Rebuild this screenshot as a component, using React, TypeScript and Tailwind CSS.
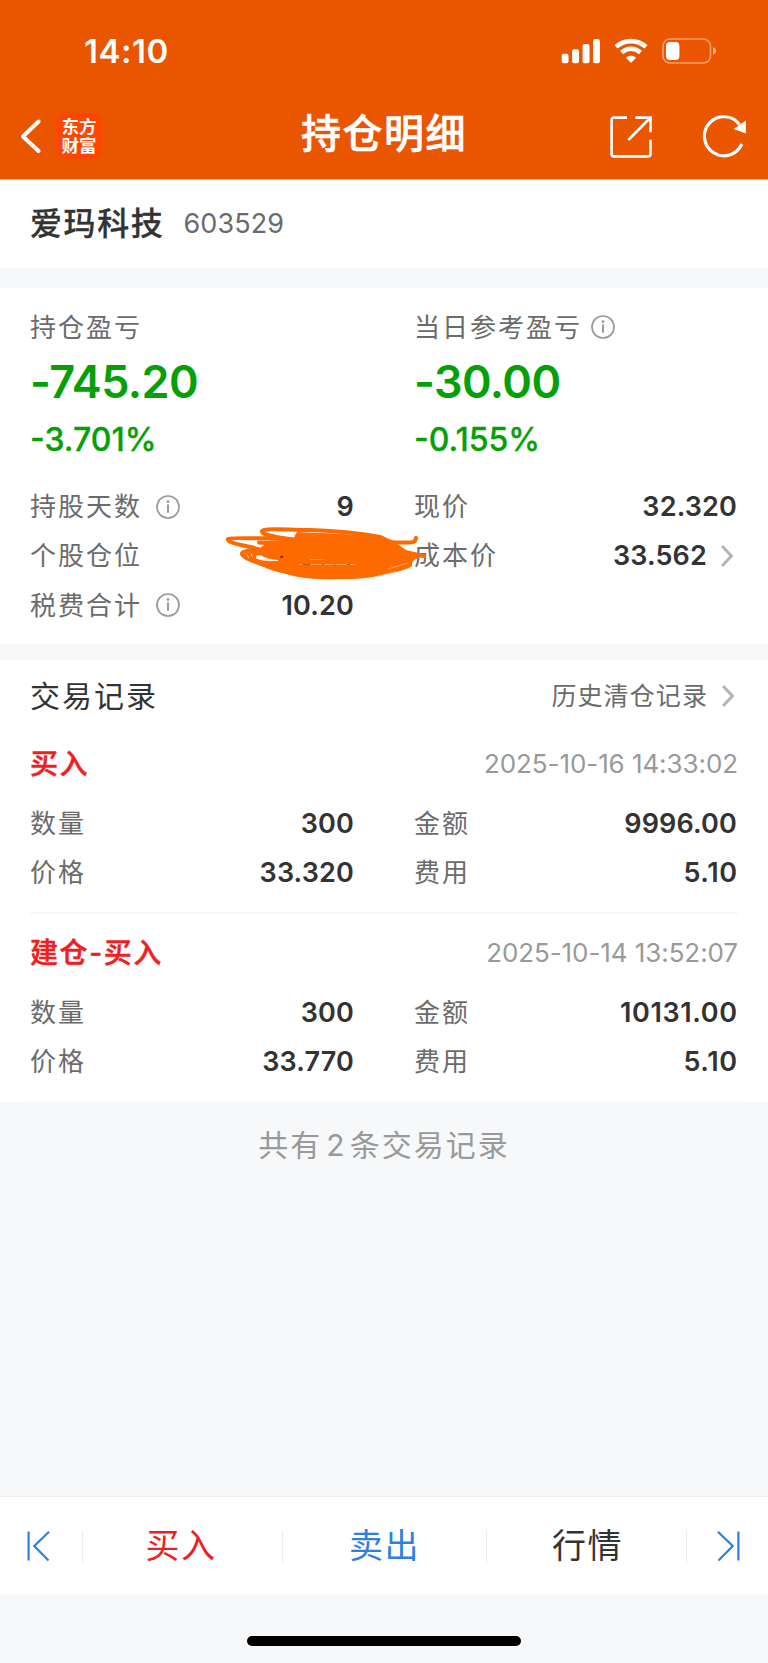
import React from "react";

const font = "font-['Inter','Noto_Sans_CJK_SC',sans-serif]";

function Info({ className = "" }: { className?: string }) {
  return (
    <svg className={`h-6 w-6 shrink-0 ${className}`} viewBox="0 0 24 24" fill="none" stroke="#999" strokeWidth="1.7">
      <circle cx="12" cy="12" r="11" />
      <path d="M12 9.4V17.8" strokeWidth="2" />
      <circle cx="12" cy="6.6" r="1.4" fill="#999" stroke="none" />
    </svg>
  );
}

function Chevron() {
  return (
    <svg className="ml-[14px] mr-[4px] h-[22px] w-3 shrink-0" viewBox="0 0 12 22" fill="none" stroke="#b3b3b3" strokeWidth="2.9">
      <path d="M1 1L10.4 11L1 21" />
    </svg>
  );
}

const label = "pt-px text-[26px] tracking-[2px] text-[#6b6b6b] whitespace-nowrap";

type CellProps = { name: string; val?: string; info?: boolean; more?: boolean; wide?: boolean };

function Cell({ name, val, info, more, wide }: CellProps) {
  return (
    <div className="flex h-[49.25px] items-center">
      <span className={label}>{name}</span>
      {info && <Info className="ml-[14px]" />}
      <span className="flex-1" />
      {val && (
        <span className={`whitespace-nowrap text-[27px] font-semibold text-[#333] ${wide ? "-mr-[0.6px] tracking-[0.6px]" : "tracking-[0.15px]"}`}>
          {val}
        </span>
      )}
      {more && <Chevron />}
    </div>
  );
}

function Trade({ type, time, price, amount, wide }: { type: string; time: string; price: string; amount: string; wide?: boolean }) {
  return (
    <div className="flex h-[189px] flex-col border-b-2 border-[#f8f8f9]">
      <div className="mt-[19px] flex h-10 items-center justify-between">
        <span className="text-[28px] font-medium tracking-[1.6px] text-[#f01e23] [-webkit-text-stroke:0.5px]">{type}</span>
        <span className="text-[26px] tracking-[-0.08px] text-[#999]">{time}</span>
      </div>
      <div className="mt-[15px] grid grid-cols-[324px_323px] gap-x-[60px]">
        <Cell name="数量" val="300" />
        <Cell name="金额" val={amount} wide={wide} />
        <Cell name="价格" val={price} />
        <Cell name="费用" val="5.10" wide />
      </div>
    </div>
  );
}

type ProfitProps = { title: string; amount: string; percent: string; info?: boolean };

function Profit({ title, amount, percent, info }: ProfitProps) {
  return (
    <div className="flex flex-col">
      <div className="flex h-[38px] items-center">
        <span className={label}>{title}</span>
        {info && <Info className="ml-[9px]" />}
      </div>
      <div className="mt-[7px] flex h-14 items-center text-[45px] font-semibold tracking-[-0.6px] text-[#05a005]">{amount}</div>
      <div className="mt-[11px] flex h-10 items-center text-[32px] font-medium text-[#05a005] [-webkit-text-stroke:0.3px]">
        {percent}
      </div>
    </div>
  );
}

function Scribble() {
  return (
    <svg
      className="absolute left-[190px] top-[33px] h-[75px] w-[215px]"
      viewBox="0 0 215 75"
      fill="none"
      stroke="#ff6a00"
      strokeWidth="4"
      strokeLinecap="round"
      strokeLinejoin="round"
    >
      <path
        d="M38 26L62 25L78 18C100 18 140 19 158 22C166 24 168 27 174 28C180 30 183 33 186 35L207 40C200 43 192 43 192 50C182 56 172 58 165 59C152 63 140 64 125 64C105 64 85 64 72 60C57 58 40 52 28 44L24 39L38 34L46 29Z"
        fill="#ff6a00"
        stroke="none"
      />
      <path d="M38 34C28 31 6 28 8 24C10 22 40 24 62 23M76 24C56 22 41 20 42 16C43 13 75 15 90 15C120 16 145 19 160 22C166 24 168 27 174 27.5H190C195 27.5 195 26 196 23" />
      <path d="M39 27.5L60 29M78 19L150 23M40 35C30 35 21 36 22 39C24 43 36 48 50 51C60 55 68 59 85 61C105 63 130 62 150 60C165 56 180 56 190 50M180 38L204 41" />
      <path d="M37 40.500L40.500 40.500C45 43.500 51 45 58 45.500C50 46 42 45.500 37 43.500ZM27 39.500L28.500 42.500M31.500 39L32 41M56 19.500L75 18.800L74 22C68 21.500 62 20.500 56 19.500" fill="#fff" stroke="#fff" strokeWidth="0.800" />
      <path d="M80 49.500H135M158 61L176 56.500M168 54L188 48M90 44.500H103" stroke="#ffa362" strokeWidth="0.900" />
      <path d="M61 42L62.500 41.600" stroke="#4a2408" strokeWidth="1.800" />
      <path d="M83 49.500H90M102.500 49.500H103.500M114 50H115M127.500 49.500H129.500" stroke="#b8520f" strokeWidth="1.200" />
    </svg>
  );
}

function StatusIcons() {
  return (
    <svg className="h-[30px] w-[158px]" viewBox="0 0 158 30" fill="#fff">
      <rect x="1.700" y="17.800" width="6.800" height="9.400" rx="2" />
      <rect x="12.100" y="13.200" width="6.900" height="14" rx="2" />
      <rect x="22.600" y="8" width="6.900" height="19.200" rx="2" />
      <rect x="33" y="3" width="6.900" height="24.200" rx="2" />
      <g fill="none" stroke="#fff" strokeWidth="4.600">
        <path d="M56 10.800C65 3.200 77 3.200 86 10.800" />
        <path d="M61.500 16.600C67.500 11.500 74.500 11.500 80.500 16.600" />
      </g>
      <path d="M66 21.800C69 19.200 73 19.200 76 21.800L71 27Z" />
      <rect x="103" y="3" width="47.500" height="24" rx="7" fill="none" stroke="#fff" strokeOpacity="0.42" strokeWidth="1.700" />
      <rect x="106" y="6" width="13.400" height="18" rx="4" />
      <path d="M153 11C157 12.500 157 17.500 153 19Z" fillOpacity="0.500" />
    </svg>
  );
}

function Divider() {
  return <span className="h-[33px] w-px bg-[#ebebed]" />;
}

export default function App() {
  return (
    <div className={`flex h-[1663px] w-[768px] flex-col overflow-hidden bg-[#f7f8fa] leading-none ${font}`}>
      <header className="flex h-[180px] flex-col border-b border-[#ecc3a6] bg-[#ea5500] text-white">
        <div className="flex h-[102px] items-center justify-between pl-[84px] pr-[50px]">
          <span className="pt-px text-[33px] font-semibold tracking-[0.5px]">14:10</span>
          <StatusIcons />
        </div>
        <div className="grid h-[70px] grid-cols-[1fr_auto_1fr] items-center px-5">
          <div className="flex items-center">
            <svg className="h-9 w-[22px]" viewBox="0 0 22 36" fill="none" stroke="#fff" strokeWidth="4" strokeLinecap="round" strokeLinejoin="round">
              <path d="M18.500 2.500L3 17.500L18.500 32" />
            </svg>
            <div className="mb-[2px] ml-[14px] flex h-[46px] w-[46px] flex-col items-center justify-center gap-[1px] rounded-[10px] bg-[#ff4500] text-[17.500px] font-bold">
              <span>东方</span>
              <span>财富</span>
            </div>
          </div>
          <span className="mb-[6px] text-[40px] font-medium tracking-[1.500px] [-webkit-text-stroke:0.6px]">持仓明细</span>
          <div className="flex items-center justify-end gap-[50px]">
            <svg className="h-[42px] w-[42px]" viewBox="0 0 42 42" fill="none" stroke="#fff" strokeWidth="2.600">
              <path d="M17 1.600H4Q1.600 1.600 1.600 4V38Q1.600 40.400 4 40.400H38Q40.500 40.400 40.500 38V23.700M25.300 1.600H40.500V16.300M40.500 1.600L18.300 24" />
            </svg>
            <svg className="h-[46px] w-[46px]" viewBox="0 0 46 46" fill="none" stroke="#fff" strokeWidth="3.200">
              <path d="M39.800 30A19.500 19.500 0 1 1 37.500 10.500" />
              <path d="M43.900 6.500V19.500L31.600 14.900Z" fill="#fff" stroke="none" />
            </svg>
          </div>
        </div>
      </header>

      <section className="flex h-[88px] items-center bg-white px-[30px]">
        <h1 className="pb-px text-[32px] font-medium tracking-[1.600px] text-[#333] [-webkit-text-stroke:0.3px]">爱玛科技</h1>
        <span className="ml-[19px] pb-[2px] text-[27px] tracking-[0.1px] text-[#6b6b6b]">603529</span>
      </section>

      <section className="mt-5 h-[356px] bg-white px-[30px] pt-5">
        <div className="grid grid-cols-[324px_323px] gap-x-[60px]">
          <Profit title="持仓盈亏" amount="-745.20" percent="-3.701%" />
          <Profit title="当日参考盈亏" amount="-30.00" percent="-0.155%" info />
        </div>
        <div className="relative mt-[22px] grid grid-cols-[324px_323px] gap-x-[60px]">
          <Cell name="持股天数" val="9" info />
          <Cell name="现价" val="32.320" />
          <Cell name="个股仓位" />
          <Cell name="成本价" val="33.562" more />
          <Cell name="税费合计" val="10.20" info />
          <Scribble />
        </div>
      </section>

      <section className="mt-4 h-[442px] bg-white px-[30px]">
        <div className="flex h-[65px] items-center justify-between pt-[6px]">
          <h2 className="text-[30px] tracking-[2px] text-[#333]">交易记录</h2>
          <span className="flex items-center text-[25px] tracking-[1.100px] text-[#6b6b6b]">
            <span className="pt-px">历史清仓记录</span>
            <Chevron />
          </span>
        </div>
        <Trade type="买入" time="2025-10-16 14:33:02" price="33.320" amount="9996.00" />
        <Trade type="建仓-买入" time="2025-10-14 13:52:07" price="33.770" amount="10131.00" wide />
      </section>

      <div className="flex h-[86px] items-center justify-center text-[30px] tracking-[2px] text-[#999]">
        共有<span className="ml-[4px] mr-[3px]">2</span>条交易记录
      </div>

      <nav className="mt-auto flex h-[99px] items-center border-t border-[#efeff1] bg-white text-[34px] tracking-[1.500px]">
        <div className="flex w-[82px] justify-start pl-[26px]">
          <svg className="h-[30px] w-6" viewBox="0 0 24 30" fill="none" stroke="#2f7fe3" strokeWidth="2.200">
            <path d="M2.600 0.500V29.500M23 0.800L8.300 15L22.500 29.500" />
          </svg>
        </div>
        <Divider />
        <div className="w-[199px] pr-[3px] text-center text-[#f01e23]">买入</div>
        <Divider />
        <div className="w-[203px] text-center text-[#2f7fe3]">卖出</div>
        <Divider />
        <div className="w-[199px] pl-[2px] text-center text-[#333]">行情</div>
        <Divider />
        <div className="flex flex-1 justify-end pr-[27px]">
          <svg className="h-[30px] w-6" viewBox="0 0 24 30" fill="none" stroke="#2f7fe3" strokeWidth="2.200">
            <path d="M21.400 0.500V29.500M1 0.800L15.700 15L1.500 29.500" />
          </svg>
        </div>
      </nav>
      <div className="flex h-[68px] justify-center pt-[41px]">
        <div className="h-[10px] w-[274px] rounded-full bg-black" />
      </div>
    </div>
  );
}
